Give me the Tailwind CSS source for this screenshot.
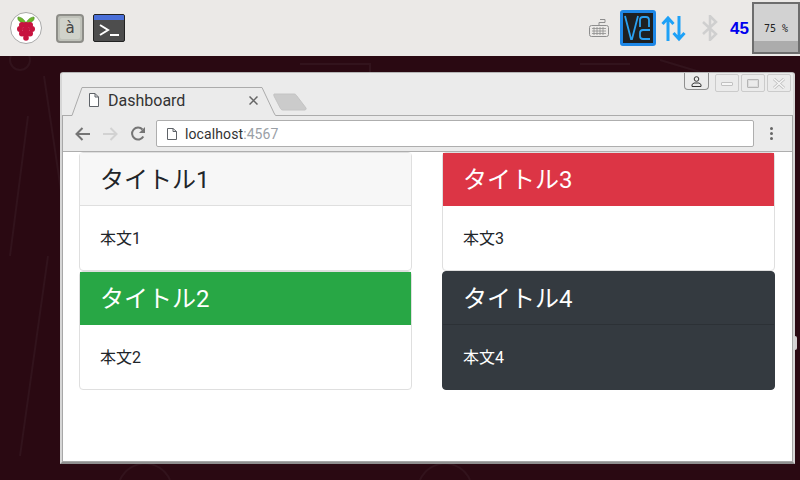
<!DOCTYPE html>
<html lang="ja">
<head>
    <meta charset="UTF-8">
    <title>Dashboard</title>
    <script src="https://cdn.jsdelivr.net/npm/@tailwindcss/browser@4"></script>
</head>
<body class="w-[800px] h-[480px] overflow-hidden bg-[#2a0912] font-['Roboto','Noto_Sans_CJK_JP',sans-serif]">
    <div class="relative w-[800px] h-[480px] overflow-hidden">
        <!-- Taskbar -->
        <div class="h-[56px] bg-[#ebe9e7] flex items-center">
            <div class="ml-[10px] w-[32px] h-[32px] rounded-full bg-white border border-[#a9a9a9] flex items-center justify-center">
                <svg width="24" height="27" viewBox="0 0 24 27">
                    <path d="M12 8C10 4 7 2 4 2c-1 3 2 6 8 6zM12 8c2-4 5-6 8-6 1 3-2 6-8 6z" fill="#6cb52d" stroke="#4c8a20" stroke-width=".6"/>
                    <g fill="#c7143f">
                        <circle cx="8" cy="10" r="3"/><circle cx="12" cy="10" r="3"/><circle cx="16" cy="10" r="3"/>
                        <circle cx="6" cy="14" r="3"/><circle cx="12" cy="14.500" r="3.200"/><circle cx="18" cy="14" r="3"/>
                        <circle cx="8" cy="18.500" r="3"/><circle cx="12" cy="19.500" r="3"/><circle cx="16" cy="18.500" r="3"/>
                        <circle cx="12" cy="23" r="2.800"/>
                    </g>
                </svg>
            </div>
            <div class="ml-[14px] w-[28px] h-[29px] rounded-[4px] border-2 border-[#8d8d88] bg-[#bfc1b9] flex items-center justify-center text-[15px] leading-none text-[#444] font-['DejaVu_Sans',sans-serif]">
                <span class="w-[20px] h-[21px] rounded-[2px] bg-[#d0d2ca] flex items-center justify-center">à</span>
            </div>
            <div class="ml-[9px] w-[32px] h-[28px] rounded-[2px] bg-[#4d4d4d] border border-[#222] overflow-hidden">
                <div class="h-[5px] bg-[#4a6fd8]"></div>
                <svg width="30" height="21" viewBox="0 0 30 21">
                    <path d="M6 5l8 5-8 5" fill="none" stroke="#fff" stroke-width="2"/>
                    <path d="M16 15h9" stroke="#fff" stroke-width="2"/>
                </svg>
            </div>
            <div class="ml-auto flex items-center">
                <svg class="mr-[11px]" width="20" height="20" viewBox="0 0 20 20" fill="none" stroke="#8e8e8e">
                    <rect x=".5" y="7.500" width="19" height="11" rx="2"/>
                    <path d="M3 10.500h14M3 13h14M3 15.500h14M5 9v8M8 9v8M11 9v8M14 9v8" stroke-width=".8"/>
                    <path d="M10 7V4.500h6V1.500h-5"/>
                </svg>
                <div class="w-[36px] h-[36px] rounded-[3px] bg-[#1e2022] border-[3px] border-[#1e87e6] flex items-center justify-center">
                    <svg width="30" height="30" viewBox="0 0 30 30" fill="none" stroke="#2aa0f0" stroke-width="1.800">
                        <path d="M2 3l6 23h1l6-23"/>
                        <path d="M17 14V7c0-2 1-3 3-3h3c2 0 3 1 3 3v7"/>
                        <path d="M27 17h-7c-2 0-3 1-3 3v3c0 2 1 3 3 3h7"/>
                    </svg>
                </div>
                <svg class="ml-[5px]" width="25" height="27" viewBox="0 0 25 27" fill="none" stroke="#1ea1f7" stroke-width="3">
                    <path d="M7 26V3M1.500 9L7 3l5.500 6"/>
                    <path d="M18 1v23M12.500 18l5.500 6 5.500-6"/>
                </svg>
                <svg class="ml-[16px]" width="16" height="26" viewBox="0 0 16 26" fill="none" stroke="#cfcfcf" stroke-width="2.500">
                    <path d="M1 7l13 12-6 6V1l6 6L1 19"/>
                </svg>
                <span class="ml-[12px] w-[22px] text-[17px] font-bold text-[#0000ee] font-['Liberation_Sans',sans-serif] leading-none">45</span>
                <div class="w-[48px] h-[52px] bg-[#d2d2d2] border-2 border-[#6d6d6d] flex flex-col">
                    <div class="flex-1 flex items-end justify-center pb-[7px] text-[10px] leading-none text-[#222] font-['DejaVu_Sans_Mono',monospace]">75 %</div>
                    <div class="h-[11px] bg-[#acacac]"></div>
                </div>
            </div>
        </div>

        <!-- Desktop wallpaper -->
        <svg class="absolute left-0 top-[56px]" width="800" height="424" viewBox="0 0 800 424" fill="none" stroke="#32131c" stroke-width="2">
            <path d="M20 400L48 200M28 60L10 200M90 330L44 20"/>
            <path d="M120 424c10-22 40-22 50 0M420 424c10-22 40-22 50 0M300 8h70v8M580 8h50M660 4l40 12"/>
            <circle cx="20" cy="4" r="10"/>
        </svg>
        <div class="absolute left-[795px] top-[336px] w-[2px] h-[14px] rounded-r-full bg-white/80"></div>

        <!-- Browser window -->
        <div class="absolute left-[60px] top-[72px] w-[735px] h-[392px] rounded-t-[3px] bg-[#ebebeb] border-2 border-t border-[#d6d6d6] border-t-[#b5b5b5] border-b-[#8f8f8f] flex flex-col">
            <!-- Tab strip -->
            <div class="relative h-[43px] shrink-0">
                <svg class="absolute left-0 top-0" width="731" height="43" viewBox="0 0 731 43" fill="#ebebeb" stroke="#ababab">
                    <path d="M0 42.500H10L20 14.500H200L212 40l1.500 2.500H731"/>
                </svg>
                <svg class="absolute left-[211px] top-[20px]" width="36" height="18" viewBox="0 0 36 18">
                    <path d="M1 1h20c1 0 2 .5 2.500 1.500L33 15c.5 1-.5 2-1 2H10c-1 0-2-.5-2.500-1.500L1 3c-.5-1 0-2 0-2z" fill="#cbcbcb" stroke="#c4c4c4"/>
                </svg>
                <svg class="absolute left-[26px] top-[20px]" width="12" height="14" viewBox="0 0 12 14" fill="#fff" stroke="#5f6368">
                    <path d="M1.500.5h5.500l3.500 3.500v9.500h-9zM7 .5v3.500h3.500"/>
                </svg>
                <span class="absolute left-[46px] top-[18px] text-[16px] leading-[19px] text-[#333]">Dashboard</span>
                <svg class="absolute left-[187px] top-[23px]" width="9" height="9" viewBox="0 0 9 9" stroke="#666" stroke-width="1.500">
                    <path d="M.5.5l8 8M8.500.5l-8 8"/>
                </svg>
                <!-- Window controls -->
                <div class="absolute right-[2px] top-0 flex items-start">
                    <div class="w-[25px] h-[17px] mr-[6px] rounded-b-[4px] border border-t-0 border-[#8f8f8f] flex items-center justify-center">
                        <svg width="11" height="11" viewBox="0 0 11 11" fill="none" stroke="#333">
                            <circle cx="5.500" cy="3" r="2.300"/><path d="M1 10.500V8.500l2-1.500h5l2 1.500v2z"/>
                        </svg>
                    </div>
                    <div class="w-[24px] h-[18px] mt-[1px] mr-[2px] rounded-[2px] border border-[#cbcbcb] flex items-center justify-center">
                        <div class="w-[12px] h-[4px] mt-[1px] rounded-[1px] bg-[#f6f6f6] border border-[#c2c2c2]"></div>
                    </div>
                    <div class="w-[24px] h-[18px] mt-[1px] mr-[2px] rounded-[2px] border border-[#cbcbcb] flex items-center justify-center">
                        <div class="w-[12px] h-[9px] rounded-[1px] border border-[#b5b5b5] bg-[#dcdcdc] flex items-center justify-center">
                            <div class="w-[8px] h-[5px] bg-[#ebebeb]"></div>
                        </div>
                    </div>
                    <div class="w-[24px] h-[18px] mt-[1px] rounded-[2px] border border-[#cbcbcb] flex items-center justify-center">
                        <svg width="12" height="11" viewBox="0 0 12 11" fill="none">
                            <path d="M1 1l10 9M11 1L1 10" stroke="#bdbdbd" stroke-width="3"/>
                            <path d="M1 1l10 9M11 1L1 10" stroke="#f6f6f6" stroke-width="1.500"/>
                        </svg>
                    </div>
                </div>
            </div>

            <!-- Toolbar and page, framed by a thin line -->
            <div class="flex-1 min-h-0 flex flex-col border-x border-b border-[#a8a8a8]">
                <div class="h-[36px] shrink-0 border-b border-[#aeaeae] flex items-center">
                    <svg class="ml-[12px]" width="16" height="14" viewBox="0 0 16 14" fill="none" stroke="#757575" stroke-width="2">
                        <path d="M15 7H2M7.500 1L1.500 7l6 6"/>
                    </svg>
                    <svg class="ml-[11px]" width="16" height="14" viewBox="0 0 16 14" fill="none" stroke="#d2d2d2" stroke-width="2">
                        <path d="M1 7h13M8.500 1l6 6-6 6"/>
                    </svg>
                    <svg class="ml-[12px]" width="16" height="16" viewBox="0 0 16 16" fill="none" stroke="#757575" stroke-width="2">
                        <path d="M13.300 10.500A6 6 0 1 1 12.500 3.500"/>
                        <path d="M15 1v6H9z" fill="#757575" stroke="none"/>
                    </svg>
                    <div class="ml-[10px] w-[598px] h-[27px] bg-white rounded-[2px] border border-[#aeaeae] flex items-center">
                        <svg class="ml-[10px]" width="10" height="12" viewBox="0 0 10 12" fill="#fff" stroke="#5f6368">
                            <path d="M.5.500h5.500l3.500 3v8h-9zM6 .5v3h3.500"/>
                        </svg>
                        <span class="ml-[8px] text-[14px] leading-none text-[#333] tracking-[0.1px]">localhost<span class="text-[#9aa0a6]">:4567</span></span>
                    </div>
                    <div class="ml-[16px] flex flex-col gap-[2px]">
                        <div class="w-[3px] h-[3px] rounded-full bg-[#666]"></div>
                        <div class="w-[3px] h-[3px] rounded-full bg-[#666]"></div>
                        <div class="w-[3px] h-[3px] rounded-full bg-[#666]"></div>
                    </div>
                </div>

                <!-- Page -->
                <div class="flex-1 bg-white pl-[16px] pr-[17px] grid grid-cols-2 gap-x-[30px] content-start">
                    <div class="h-[119px] rounded-[4px] border border-[#dfdfdf] bg-white text-[#212529]">
                        <div class="h-[53px] px-[20px] pt-[1px] flex items-center bg-[#f7f7f7] border-b border-[#dfdfdf] text-[24px] leading-none">タイトル1</div>
                        <div class="px-[20px] pt-[21px] text-[16px] leading-[24px]">本文1</div>
                    </div>
                    <div class="h-[119px] rounded-[4px] border border-[#dfdfdf] bg-white text-[#212529]">
                        <div class="h-[53px] px-[20px] pt-[1px] flex items-center bg-[#dc3545] text-white text-[24px] leading-none">タイトル3</div>
                        <div class="px-[20px] pt-[21px] text-[16px] leading-[24px]">本文3</div>
                    </div>
                    <div class="h-[119px] rounded-[4px] border border-[#dfdfdf] bg-white text-[#212529]">
                        <div class="h-[53px] px-[20px] pt-[1px] flex items-center bg-[#28a745] text-white text-[24px] leading-none">タイトル2</div>
                        <div class="px-[20px] pt-[21px] text-[16px] leading-[24px]">本文2</div>
                    </div>
                    <div class="h-[119px] rounded-[4px] border border-[#343a40] bg-[#343a40] text-white">
                        <div class="h-[53px] px-[20px] pt-[1px] flex items-center border-b border-[#2c3136] text-[24px] leading-none">タイトル4</div>
                        <div class="px-[20px] pt-[21px] text-[16px] leading-[24px]">本文4</div>
                    </div>
                </div>
            </div>
        </div>
    </div>
</body>
</html>
